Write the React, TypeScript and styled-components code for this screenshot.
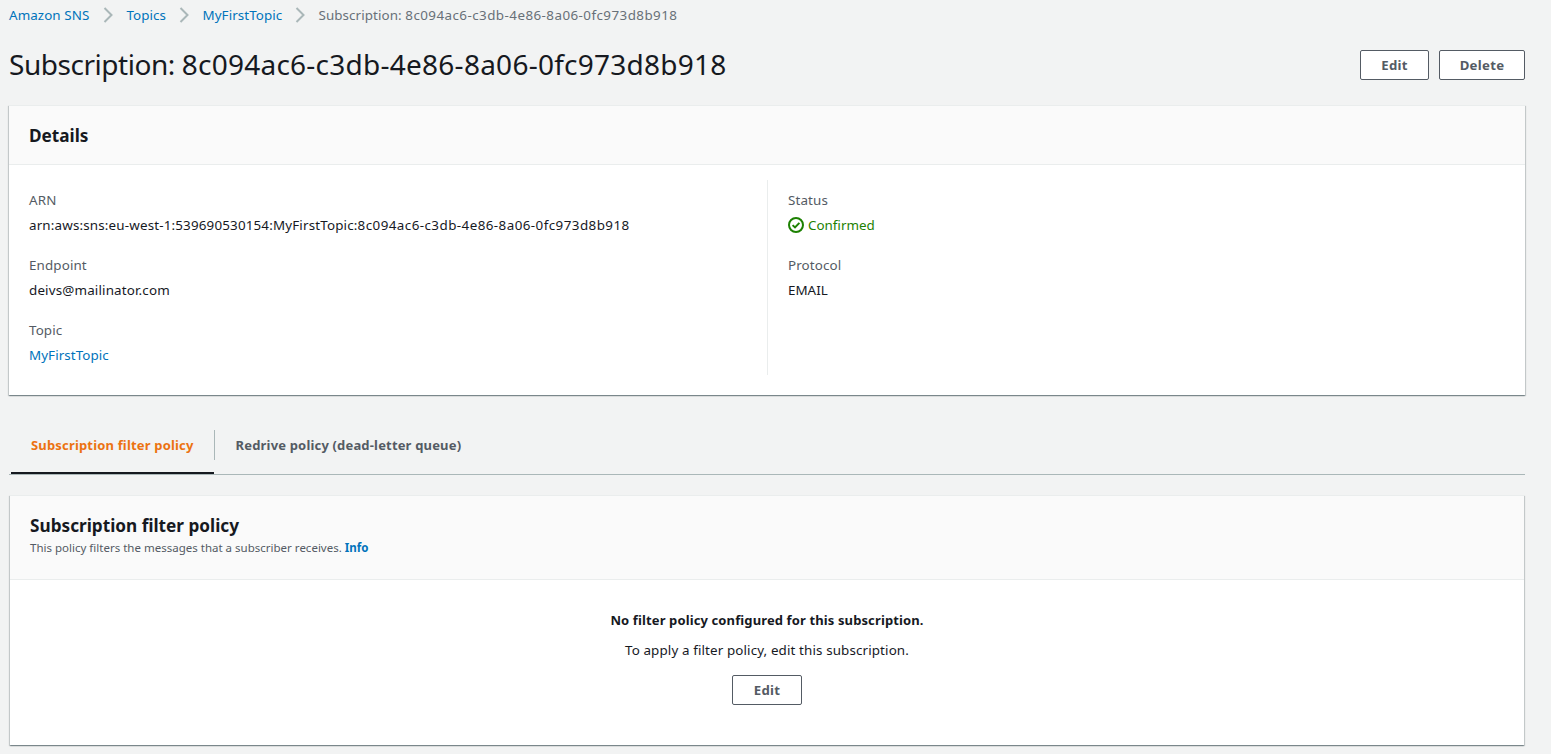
import React from 'react';
import styled, { createGlobalStyle } from 'styled-components';

const GlobalStyle = createGlobalStyle`
  * { box-sizing: border-box; }
  body {
    margin: 0;
    background: #f2f3f3;
    color: #16191f;
    font-family: "Noto Sans", sans-serif;
    font-size: 13.4px;
    letter-spacing: 0.12px;
    line-height: 20px;
  }
  h1, h2, p, dl, dt, dd { margin: 0; }
`;

const Page = styled.main`
  height: 754px;
  padding: 5px 26px 0 9px;
  overflow: hidden;
`;

const Breadcrumbs = styled.nav`
  display: flex;
  align-items: center;
  height: 20px;
`;

const Link = styled.a<{ $strong?: boolean }>`
  color: #0073bb;
  text-decoration: none;
  font-weight: ${p => (p.$strong ? 700 : 400)};
`;

const Crumb = styled(Link)<{ $width: number }>`
  width: ${p => p.$width}px;
  letter-spacing: 0.07px;
  white-space: nowrap;
`;

const Identifier = styled.span`
  letter-spacing: 0.44px;
`;

const CurrentCrumb = styled.span`
  color: #687078;
  letter-spacing: 0.08px;
`;

const Separator = styled.svg`
  width: 10px;
  height: 16px;
  margin: 0 14px 0 13px;
  flex: none;
  fill: none;
  stroke: #aab7b8;
  stroke-width: 2;
`;

const TitleBar = styled.header`
  display: flex;
  align-items: center;
  justify-content: space-between;
  height: 36px;
  margin: 21px 0 23px;
`;

const Title = styled.h1`
  font-size: 28px;
  line-height: 36px;
  font-weight: 400;
  letter-spacing: -0.46px;

  ${Identifier} {
    letter-spacing: 0.25px;
  }
`;

const Actions = styled.div`
  display: flex;
  gap: 10px;
  margin-top: 2px;
`;

const Button = styled.button<{ $width: number }>`
  width: ${p => p.$width}px;
  height: 30px;
  padding: 0;
  border: 1px solid #545b64;
  border-radius: 2px;
  background: #fff;
  color: #545b64;
  font: 700 13.2px/20px "Noto Sans", sans-serif;
  letter-spacing: 0.3px;
`;

const Panel = styled.section`
  background: #fff;
  border-top: 1px solid #eaeded;
  box-shadow:
    0 1px 1px 0 rgba(0, 28, 36, 0.3),
    1px 1px 1px 0 rgba(0, 28, 36, 0.15),
    -1px 1px 1px 0 rgba(0, 28, 36, 0.15);
`;

const PanelHeader = styled.div<{ $height: number }>`
  height: ${p => p.$height}px;
  padding: 19px 20px 0;
  background: #fafafa;
  border-bottom: 1px solid #eaeded;
`;

const PanelTitle = styled.h2`
  font-size: 17.2px;
  line-height: 22px;
  font-weight: 700;
  letter-spacing: 0;
`;

const PanelNote = styled.p`
  margin-top: 2px;
  color: #545b64;
  font-size: 11.5px;
  line-height: 18px;
  letter-spacing: 0.005px;
`;

const Columns = styled.div`
  display: grid;
  grid-template-columns: 758px 1fr;
  padding: 15px 0 20px;
`;

const Column = styled.dl<{ $divided?: boolean }>`
  display: flex;
  flex-direction: column;
  gap: 20px;
  padding: 10px 20px;
  border-left: ${p => (p.$divided ? '1px solid #eaeded' : 'none')};
`;

const Label = styled.dt`
  color: #545b64;
`;

const Value = styled.dd<{ $spacing?: number }>`
  margin-top: 5px;
  letter-spacing: ${p => p.$spacing ?? 0.12}px;
`;

const Status = styled.span`
  display: flex;
  align-items: center;
  gap: 4px;
  color: #1d8102;
  letter-spacing: 0;
`;

const StatusIcon = styled.svg`
  width: 16px;
  height: 16px;
  fill: none;
  stroke: currentColor;
  stroke-width: 2;
`;

const Tabs = styled.div`
  display: flex;
  height: 60px;
  margin-top: 20px;
  padding-left: 2px;
  border-bottom: 1px solid #aab7b8;
`;

const Tab = styled.div<{ $active?: boolean }>`
  display: flex;
  height: 59px;
  padding-top: 15px;
  font-size: 13px;
  font-weight: 700;
  letter-spacing: 0.17px;
  line-height: 30px;
  color: ${p => (p.$active ? '#ec7211' : '#545b64')};
  border-bottom: ${p => (p.$active ? '2px solid #16191f' : 'none')};
`;

const TabLabel = styled.span<{ $width: number }>`
  width: ${p => p.$width}px;
  padding-left: 20px;
  white-space: nowrap;
`;

const TabDivider = styled.span`
  width: 1px;
  height: 30px;
  margin: 15px 0.6px 0 0;
  background: #aab7b8;
`;

const TabContent = styled.div`
  padding: 20px 1px 0;
`;

const EmptyState = styled.div`
  display: flex;
  flex-direction: column;
  align-items: center;
  height: 165px;
  padding-top: 30px;
`;

const EmptyTitle = styled.p`
  margin-bottom: 10px;
  font-size: 13px;
  font-weight: 700;
`;

const EmptyText = styled.p`
  margin-bottom: 15px;
`;

const Chevron = () => (
  <Separator viewBox="0 0 10 16">
    <path d="M1.5 1 8.5 8l-7 7" />
  </Separator>
);

const ID = '8c094ac6-c3db-4e86-8a06-0fc973d8b918';

export default function App() {
  return (
    <>
      <GlobalStyle />
      <Page>
        <Breadcrumbs>
          <Crumb $width={80.5}>Amazon SNS</Crumb>
          <Chevron />
          <Crumb $width={39}>Topics</Crumb>
          <Chevron />
          <Crumb $width={79}>MyFirstTopic</Crumb>
          <Chevron />
          <CurrentCrumb>Subscription: <Identifier>{ID}</Identifier></CurrentCrumb>
        </Breadcrumbs>

        <TitleBar>
          <Title>Subscription: <Identifier>{ID}</Identifier></Title>
          <Actions>
            <Button $width={69}>Edit</Button>
            <Button $width={86}>Delete</Button>
          </Actions>
        </TitleBar>

        <Panel>
          <PanelHeader $height={59}>
            <PanelTitle>Details</PanelTitle>
          </PanelHeader>
          <Columns>
            <Column>
              <div>
                <Label>ARN</Label>
                <Value $spacing={0.165}>arn:aws:sns:eu-west-1:539690530154:MyFirstTopic:<Identifier>{ID}</Identifier></Value>
              </div>
              <div>
                <Label>Endpoint</Label>
                <Value $spacing={0.16}>deivs@mailinator.com</Value>
              </div>
              <div>
                <Label>Topic</Label>
                <Value $spacing={0.07}><Link>MyFirstTopic</Link></Value>
              </div>
            </Column>
            <Column $divided>
              <div>
                <Label>Status</Label>
                <Value>
                  <Status>
                    <StatusIcon viewBox="0 0 16 16">
                      <circle cx="8" cy="8" r="7" />
                      <path d="m4.6 8.1 2.4 2.3 4.4-4.5" />
                    </StatusIcon>
                    Confirmed
                  </Status>
                </Value>
              </div>
              <div>
                <Label>Protocol</Label>
                <Value $spacing={0}>EMAIL</Value>
              </div>
            </Column>
          </Columns>
        </Panel>

        <Tabs>
          <Tab $active><TabLabel $width={203}>Subscription filter policy</TabLabel></Tab>
          <TabDivider />
          <Tab><TabLabel $width={265}>Redrive policy (dead-letter queue)</TabLabel></Tab>
        </Tabs>

        <TabContent>
          <Panel>
            <PanelHeader $height={84}>
              <PanelTitle>Subscription filter policy</PanelTitle>
              <PanelNote>
                This policy filters the messages that a subscriber receives. <Link $strong>Info</Link>
              </PanelNote>
            </PanelHeader>
            <EmptyState>
              <EmptyTitle>No filter policy configured for this subscription.</EmptyTitle>
              <EmptyText>To apply a filter policy, edit this subscription.</EmptyText>
              <Button $width={70}>Edit</Button>
            </EmptyState>
          </Panel>
        </TabContent>
      </Page>
    </>
  );
}
